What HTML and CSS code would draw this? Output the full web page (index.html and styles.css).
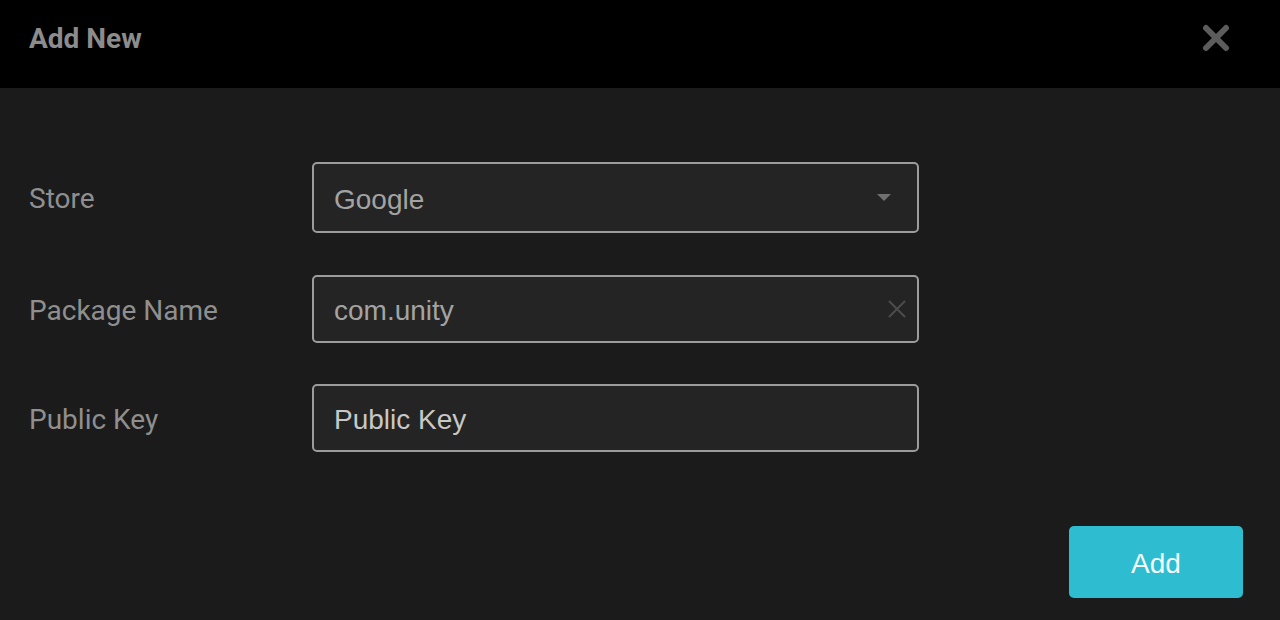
FILE: index.html
```html
<!DOCTYPE html>
<html>
<head>
<meta charset="utf-8">
<link rel="stylesheet" href="styles.css">
</head>
<body>
<div class="dialog">
  <header class="head">
    <h1 class="title">Add New</h1>
    <button class="close" aria-label="Close">
      <svg width="28" height="28" viewBox="0 0 28 28"><path d="M4 4 L24 24 M24 4 L4 24" stroke="#5c5c5c" stroke-width="6" stroke-linecap="round" fill="none"/></svg>
    </button>
  </header>
  <main class="body">
    <div class="form">
      <div class="row row-store">
        <label class="label">Store</label>
        <div class="field">
          <span class="value">Google</span>
          <svg class="caret" width="14" height="8" viewBox="0 0 14 8"><path d="M0 0 H14 L7 7 Z" fill="#707070"/></svg>
        </div>
      </div>
      <div class="row row-pkg">
        <label class="label">Package Name</label>
        <div class="field">
          <span class="value">com.unity</span>
          <svg class="clear" width="20" height="20" viewBox="0 0 20 20"><path d="M2 2 L18 18 M18 2 L2 18" stroke="#4c4c4c" stroke-width="2" fill="none"/></svg>
        </div>
      </div>
      <div class="row row-key">
        <label class="label">Public Key</label>
        <div class="field">
          <span class="value value-light">Public Key</span>
        </div>
      </div>
    </div>
    <div class="actions">
      <button class="add">Add</button>
    </div>
  </main>
</div>
</body>
</html>
```
FILE: styles.css
```css
html, body {
  margin: 0;
  padding: 0;
  background: #1b1b1b;
  width: 1280px;
  height: 620px;
  overflow: hidden;
}
.dialog {
  display: flex;
  flex-direction: column;
  height: 620px;
}
.head {
  height: 88px;
  background: #000;
  display: flex;
  align-items: center;
  justify-content: space-between;
  padding: 0 41px 0 29px;
  box-sizing: border-box;
}
.title {
  margin: 0;
  font-family: Roboto, "Liberation Sans", sans-serif;
  font-weight: 700;
  font-size: 28px;
  color: #8c8c8c;
  position: relative;
  top: -6px;
}
.close {
  background: none;
  border: 0;
  padding: 0;
  width: 28px;
  height: 28px;
  display: flex;
  position: relative;
  top: -6px;
  left: -9px;
}
.body {
  flex: 1;
  display: flex;
  flex-direction: column;
  padding: 74px 37px 0 29px;
}
.form {
  display: flex;
  flex-direction: column;
}
.row {
  display: flex;
  align-items: center;
  height: 68px;
}
.row-store {
  height: 71px;
}
.row-pkg {
  margin-top: 42px;
}
.row-key {
  margin-top: 41px;
}
.label {
  width: 283px;
  font-family: Roboto, "Liberation Sans", sans-serif;
  font-size: 28px;
  color: #8f8f8f;
  position: relative;
  top: 1px;
}
.field {
  width: 607px;
  height: 100%;
  box-sizing: border-box;
  border: 2px solid #9c9c9c;
  border-radius: 5px;
  background: #242424;
  display: flex;
  align-items: center;
  justify-content: space-between;
  padding: 0 10px 0 20px;
}
.value {
  font-family: "Liberation Sans", Arial, sans-serif;
  font-size: 28px;
  color: #a3a3a3;
  position: relative;
  top: 2px;
}
.value-light {
  color: #c8c8c8;
}
.caret {
  margin-right: 16px;
}
.actions {
  display: flex;
  justify-content: flex-end;
  margin-top: 74px;
}
.add {
  width: 174px;
  height: 72px;
  border: 0;
  border-radius: 5px;
  background: #2ebcd1;
  color: #f4f8f9;
  font-family: "Liberation Sans", Arial, sans-serif;
  font-size: 28px;
  padding: 3px 0 0;
}
```
